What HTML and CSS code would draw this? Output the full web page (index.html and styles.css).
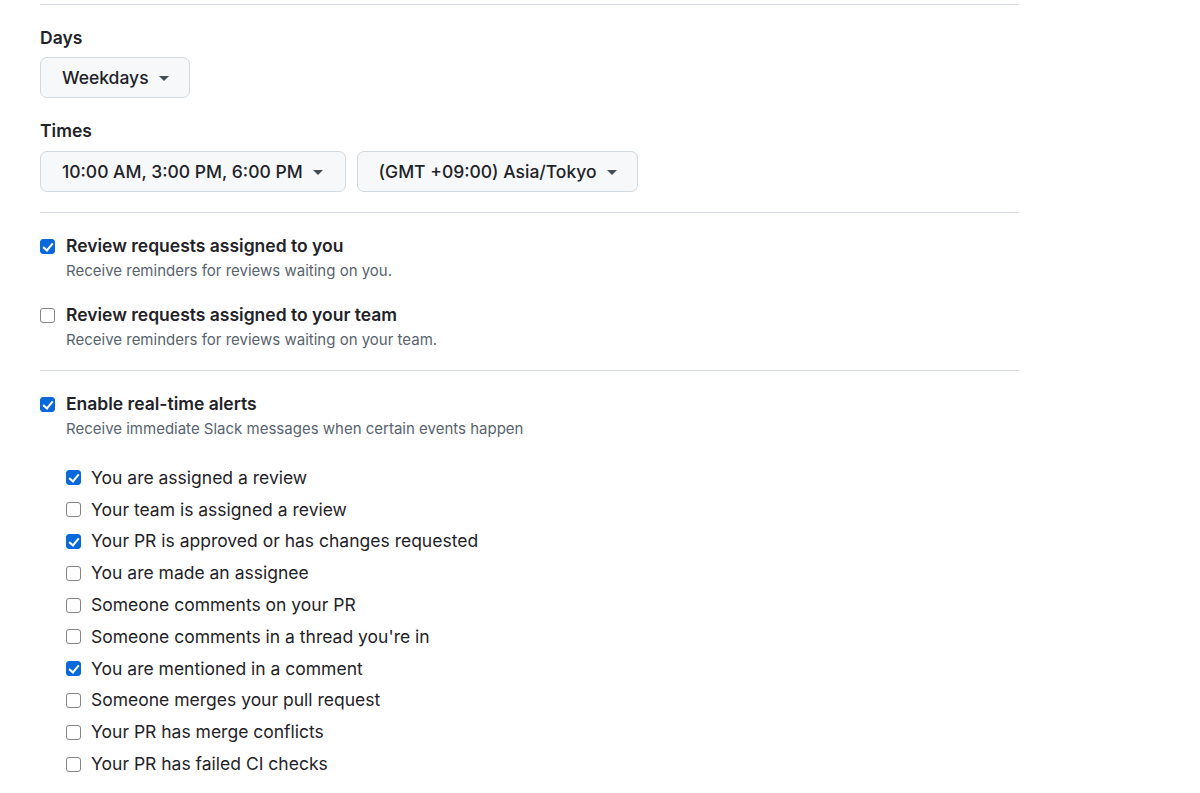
FILE: index.html
```html
<!DOCTYPE html>
<html>
<head>
<meta charset="utf-8">
<link rel="stylesheet" href="styles.css">
</head>
<body>
<div class="page">
  <div class="section top">
    <div class="label">Days</div>
    <div class="row-btns">
      <button class="btn"><span class="btn-text">Weekdays</span><span class="caret"></span></button>
    </div>
    <div class="label label-times">Times</div>
    <div class="row-btns row-times">
      <button class="btn btn-wide"><span class="btn-text">10:00 AM, 3:00 PM, 6:00 PM</span><span class="caret"></span></button>
      <button class="btn"><span class="btn-text">(GMT +09:00) Asia/Tokyo</span><span class="caret"></span></button>
    </div>
  </div>

  <div class="section reviews">
    <div class="opt">
      <div class="opt-head"><span class="cb on"></span><span class="opt-title">Review requests assigned to you</span></div>
      <div class="opt-desc">Receive reminders for reviews waiting on you.</div>
    </div>
    <div class="opt opt-2">
      <div class="opt-head"><span class="cb"></span><span class="opt-title">Review requests assigned to your team</span></div>
      <div class="opt-desc">Receive reminders for reviews waiting on your team.</div>
    </div>
  </div>

  <div class="section alerts">
    <div class="opt">
      <div class="opt-head"><span class="cb on"></span><span class="opt-title">Enable real-time alerts</span></div>
      <div class="opt-desc">Receive immediate Slack messages when certain events happen</div>
    </div>
    <ul class="events">
      <li><span class="cb on"></span>You are assigned a review</li>
      <li><span class="cb"></span>Your team is assigned a review</li>
      <li><span class="cb on"></span>Your PR is approved or has changes requested</li>
      <li><span class="cb"></span>You are made an assignee</li>
      <li><span class="cb"></span>Someone comments on your PR</li>
      <li><span class="cb"></span>Someone comments in a thread you're in</li>
      <li><span class="cb on"></span>You are mentioned in a comment</li>
      <li><span class="cb"></span>Someone merges your pull request</li>
      <li><span class="cb"></span>Your PR has merge conflicts</li>
      <li><span class="cb"></span>Your PR has failed CI checks</li>
    </ul>
  </div>
</div>
</body>
</html>
```

FILE: styles.css
```css
* { box-sizing: border-box; }
html, body { margin: 0; padding: 0; background: #ffffff; }
body {
  font-family: Inter, "Liberation Sans", sans-serif;
  color: #1f2328;
}
.page {
  width: 979px;
  margin-left: 40px;
  padding-top: 4px;
}
.section { border-top: 1px solid #d8dee4; }
.top { padding-top: 22px; padding-bottom: 20px; }
.label {
  font-size: 17.5px;
  font-weight: 600;
  line-height: 22px;
  height: 22px;
}
.label-times { margin-top: 22px; }
.row-btns {
  display: flex;
  gap: 10px;
  margin-top: 8px;
}
.row-times { margin-top: 9px; gap: 11px; }
.btn {
  display: flex;
  align-items: center;
  height: 41px;
  padding: 0 20px 0 21px;
  background: #f6f8fa;
  border: 1px solid #d1d9e0;
  border-radius: 7px;
  font-family: inherit;
  font-size: 17.5px;
  font-weight: 500;
  color: #1f2328;
  white-space: nowrap;
  gap: 10px;
}
.btn-wide { padding-right: 22px; }
.caret {
  display: inline-block;
  width: 0; height: 0;
  border-left: 5px solid transparent;
  border-right: 5px solid transparent;
  border-top: 5px solid #444c56;
  margin-top: 2px;
}
.reviews { padding-top: 22px; padding-bottom: 20px; }
.alerts { padding-top: 22px; }
.opt-head {
  display: flex;
  align-items: center;
  height: 22px;
  gap: 11px;
}
.opt-title {
  font-size: 17.5px;
  font-weight: 600;
  line-height: 22px;
}
.opt-desc {
  margin-top: 4px;
  margin-left: 26px;
  font-size: 15px;
  line-height: 20px;
  color: #59636e;
}
.opt-2 { margin-top: 23px; }
.cb {
  flex: none;
  display: inline-block;
  width: 15px;
  height: 15px;
  border: 1px solid #858585;
  border-radius: 3px;
  background: #fff;
  position: relative;
}
.cb.on {
  background: #0969da;
  border-color: #0969da;
}
.cb.on::after {
  content: "";
  position: absolute;
  left: 4px;
  top: 1px;
  width: 4px;
  height: 8px;
  border-right: 2px solid #fff;
  border-bottom: 2px solid #fff;
  transform: rotate(40deg);
}
.events {
  list-style: none;
  margin: 23px 0 0 26px;
  padding: 0;
}
.events li {
  display: flex;
  align-items: center;
  height: 31.8px;
  gap: 10px;
  font-size: 17.5px;
  line-height: 22px;
}
```
